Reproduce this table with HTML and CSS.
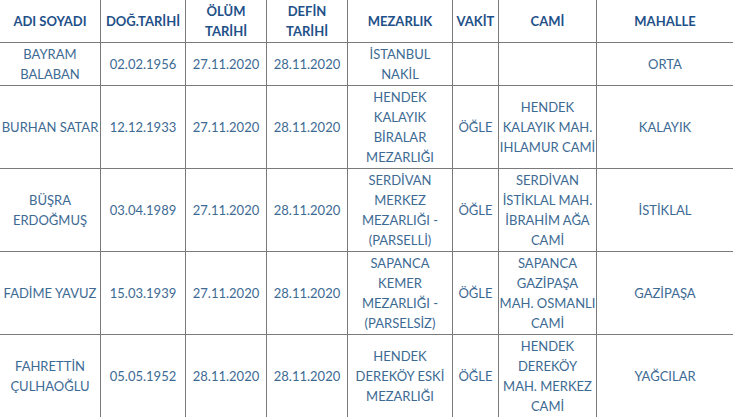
FILE: index.html
```html
<!DOCTYPE html>
<html lang="tr">
<head>
<meta charset="utf-8">
<title>Vefat Listesi</title>
<link rel="stylesheet" href="styles.css">
</head>
<body>
<div class="wrap">
<table class="list">
<colgroup>
<col class="c1"><col class="c2"><col class="c3"><col class="c4"><col class="c5"><col class="c6"><col class="c7"><col class="c8">
</colgroup>
<thead>
<tr>
<th>ADI SOYADI</th><th>DOĞ.TARİHİ</th><th>ÖLÜM TARİHİ</th><th>DEFİN TARİHİ</th><th>MEZARLIK</th><th>VAKİT</th><th>CAMİ</th><th>MAHALLE</th>
</tr>
</thead>
<tbody>
<tr class="r2">
<td>BAYRAM BALABAN</td><td>02.02.1956</td><td>27.11.2020</td><td>28.11.2020</td><td class="mez">İSTANBUL NAKİL</td><td></td><td></td><td>ORTA</td>
</tr>
<tr class="r4">
<td>BURHAN SATAR</td><td>12.12.1933</td><td>27.11.2020</td><td>28.11.2020</td><td class="mez">HENDEK KALAYIK BİRALAR MEZARLIĞI</td><td>ÖĞLE</td><td>HENDEK KALAYIK MAH. IHLAMUR CAMİ</td><td>KALAYIK</td>
</tr>
<tr class="r4">
<td>BÜŞRA ERDOĞMUŞ</td><td>03.04.1989</td><td>27.11.2020</td><td>28.11.2020</td><td class="mez">SERDİVAN MERKEZ MEZARLIĞI - (PARSELLİ)</td><td>ÖĞLE</td><td>SERDİVAN İSTİKLAL MAH. İBRAHİM AĞA CAMİ</td><td>İSTİKLAL</td>
</tr>
<tr class="r4">
<td>FADİME YAVUZ</td><td>15.03.1939</td><td>27.11.2020</td><td>28.11.2020</td><td class="mez">SAPANCA KEMER MEZARLIĞI - (PARSELSİZ)</td><td>ÖĞLE</td><td>SAPANCA GAZİPAŞA MAH. OSMANLI CAMİ</td><td>GAZİPAŞA</td>
</tr>
<tr class="r4">
<td>FAHRETTİN ÇULHAOĞLU</td><td>05.05.1952</td><td>28.11.2020</td><td>28.11.2020</td><td class="mez">HENDEK DEREKÖY ESKİ MEZARLIĞI</td><td>ÖĞLE</td><td>HENDEK DEREKÖY MAH.&nbsp;MERKEZ CAMİ</td><td>YAĞCILAR</td>
</tr>
</tbody>
</table>
</div>
</body>
</html>
```
FILE: styles.css
```css
html, body {
  margin: 0;
  padding: 0;
  background: #ffffff;
  overflow: hidden;
}
.wrap {
  width: 733px;
  height: 417px;
  overflow: hidden;
}
.list {
  border-collapse: separate;
  border-spacing: 0;
  table-layout: fixed;
  width: 734px;
  font-family: Lato, "Open Sans", sans-serif;
  font-size: 13px;
  line-height: 20px;
}
.c1 { width: 101px; }
.c2 { width: 85px; }
.c3 { width: 81px; }
.c4 { width: 81px; }
.c5 { width: 105px; }
.c6 { width: 46px; }
.c7 { width: 98px; }
.c8 { width: 137px; }
.list th,
.list td {
  box-sizing: border-box;
  border-right: 1px solid #7a7a7a;
  border-bottom: 1px solid #7a7a7a;
  padding: 1px 0;
  text-align: center;
  vertical-align: middle;
  overflow: hidden;
}
.list th {
  height: 43px;
  color: #1f5189;
  font-weight: 700;
}
.list td {
  color: #3d6a93;
  font-weight: 400;
}
.list td.mez {
  padding: 1px 4px;
}
.r2 td { height: 43px; }
.r4 td { height: 83px; }
```
